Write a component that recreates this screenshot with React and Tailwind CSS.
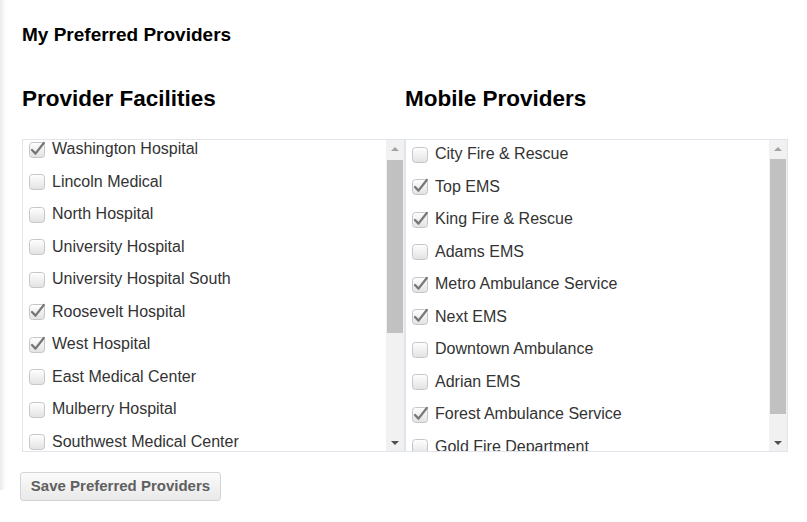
import React from "react";

const facilities = [
  ["Washington Hospital", true],
  ["Lincoln Medical", false],
  ["North Hospital", false],
  ["University Hospital", false],
  ["University Hospital South", false],
  ["Roosevelt Hospital", true],
  ["West Hospital", true],
  ["East Medical Center", false],
  ["Mulberry Hospital", false],
  ["Southwest Medical Center", false],
  ["Valley Hospital", false],
];

const mobile = [
  ["City Fire & Rescue", false],
  ["Top EMS", true],
  ["King Fire & Rescue", true],
  ["Adams EMS", false],
  ["Metro Ambulance Service", true],
  ["Next EMS", true],
  ["Downtown Ambulance", false],
  ["Adrian EMS", false],
  ["Forest Ambulance Service", true],
  ["Gold Fire Department", false],
];

function Check({ checked }) {
  return (
    <svg width="17" height="17" viewBox="0 0 17 17" className="shrink-0">
      <defs>
        <linearGradient id="cbg" x1="0" y1="0" x2="0" y2="1">
          <stop offset="0" stopColor="#ffffff" />
          <stop offset="1" stopColor="#e2e2e2" />
        </linearGradient>
      </defs>
      <rect x="0.5" y="1.5" width="15" height="15" rx="3" fill="url(#cbg)" stroke="#c6c6c6" />
      {checked && (
        <path d="M3 9 L6.5 12.6 L14.8 2" fill="none" stroke="#777" strokeWidth="2.3" strokeLinecap="round" strokeLinejoin="round" />
      )}
    </svg>
  );
}

function Scrollbar({ thumbTop, thumbHeight }) {
  return (
    <div className="w-[18px] shrink-0 bg-[#f1f1f1] flex flex-col">
      <div className="h-[17px] flex items-center justify-center">
        <div className="w-0 h-0 border-l-[4px] border-r-[4px] border-b-[4px] border-l-transparent border-r-transparent border-b-[#a3a3a3]" />
      </div>
      <div className="flex-1 px-[1px]">
        <div className="bg-[#c1c1c1]" style={{ marginTop: thumbTop, height: thumbHeight }} />
      </div>
      <div className="h-[17px] flex items-center justify-center">
        <div className="w-0 h-0 border-l-[4px] border-r-[4px] border-t-[4px] border-l-transparent border-r-transparent border-t-[#505050]" />
      </div>
    </div>
  );
}

function ProviderList({ title, items, offset, thumbTop, thumbHeight }) {
  return (
    <div className="w-[383px]">
      <h2 className="text-[22.5px] font-bold text-black leading-none h-[52px] pt-[1px]">{title}</h2>
      <div className="border border-[#dfe5ea] h-[313px] flex">
        <div className="flex-1 overflow-hidden">
          <div style={{ marginTop: offset }}>
            {items.map(([name, checked]) => (
              <div key={name} className="h-[32.5px] flex items-center gap-[6px] pl-[6px]">
                <Check checked={checked} />
                <span className="text-[16px] text-[#333]">{name}</span>
              </div>
            ))}
          </div>
        </div>
        <Scrollbar thumbTop={thumbTop} thumbHeight={thumbHeight} />
      </div>
    </div>
  );
}

export default function App() {
  return (
    <div className="relative bg-white w-[807px] h-[522px] font-['Liberation_Sans',Arial,sans-serif]">
      <div className="absolute left-0 top-0 h-[490px] w-[6px] bg-gradient-to-r from-[#ebebeb] to-white rounded-br-[4px] pointer-events-none" />
      <div className="pl-[22px] pt-[25px]">
        <h1 className="text-[19px] font-bold text-black leading-none">My Preferred Providers</h1>
        <div className="flex mt-[43px]">
          <ProviderList title="Provider Facilities" items={facilities} offset={-7} thumbTop={3} thumbHeight={173} />
          <ProviderList title="Mobile Providers" items={mobile} offset={-2} thumbTop={2} thumbHeight={255} />
        </div>
        <button className="mt-[20px] -ml-[2px] w-[201px] h-[29px] flex items-center justify-center rounded-[3px] border border-[#d4d4d4] bg-gradient-to-b from-[#fbfbfb] to-[#e9e9e9] text-[15px] font-bold text-[#606060]">
          Save Preferred Providers
        </button>
      </div>
    </div>
  );
}
